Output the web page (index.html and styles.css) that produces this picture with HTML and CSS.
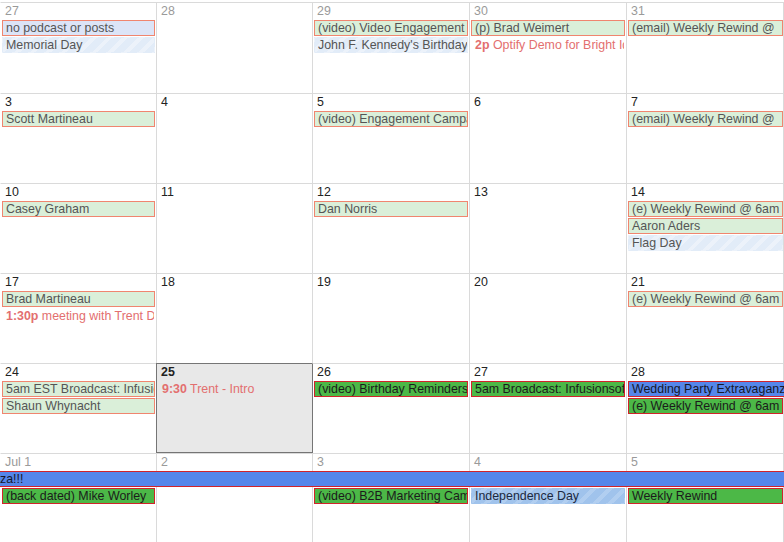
FILE: index.html
```html
<!DOCTYPE html>
<html>
<head>
<meta charset="utf-8">
<link rel="stylesheet" href="styles.css">
</head>
<body>
<div class="cal">
  <div class="week first">
    <div class="day c1 other"><span class="num">27</span></div>
    <div class="day c2 other"><span class="num">28</span></div>
    <div class="day c3 other"><span class="num">29</span></div>
    <div class="day c4 other"><span class="num">30</span></div>
    <div class="day c5 other"><span class="num">31</span></div>
    <div class="ev chip pale-blue c1 r2">no podcast or posts</div>
    <div class="ev stripe c1 r3">Memorial Day</div>
    <div class="ev chip pale c3 r2">(video) Video Engagement Campaign</div>
    <div class="ev stripe c3 r3">John F. Kennedy's Birthday</div>
    <div class="ev chip pale c4 r2">(p) Brad Weimert</div>
    <div class="ev timed c4 r3"><b>2p</b> Optify Demo for Bright Ideas</div>
    <div class="ev chip pale c5 r2">(email) Weekly Rewind @</div>
  </div>

  <div class="week">
    <div class="day c1"><span class="num">3</span></div>
    <div class="day c2"><span class="num">4</span></div>
    <div class="day c3"><span class="num">5</span></div>
    <div class="day c4"><span class="num">6</span></div>
    <div class="day c5"><span class="num">7</span></div>
    <div class="ev chip pale c1 r2">Scott Martineau</div>
    <div class="ev chip pale c3 r2">(video) Engagement Campaign</div>
    <div class="ev chip pale c5 r2">(email) Weekly Rewind @</div>
  </div>

  <div class="week">
    <div class="day c1"><span class="num">10</span></div>
    <div class="day c2"><span class="num">11</span></div>
    <div class="day c3"><span class="num">12</span></div>
    <div class="day c4"><span class="num">13</span></div>
    <div class="day c5"><span class="num">14</span></div>
    <div class="ev chip pale c1 r2">Casey Graham</div>
    <div class="ev chip pale c3 r2">Dan Norris</div>
    <div class="ev chip pale c5 r2">(e) Weekly Rewind @ 6am</div>
    <div class="ev chip pale c5 r3">Aaron Aders</div>
    <div class="ev stripe c5 r4">Flag Day</div>
  </div>

  <div class="week">
    <div class="day c1"><span class="num">17</span></div>
    <div class="day c2"><span class="num">18</span></div>
    <div class="day c3"><span class="num">19</span></div>
    <div class="day c4"><span class="num">20</span></div>
    <div class="day c5"><span class="num">21</span></div>
    <div class="ev chip pale c1 r2">Brad Martineau</div>
    <div class="ev timed c1 r3"><b>1:30p</b> meeting with Trent Dyrsmid</div>
    <div class="ev chip pale c5 r2">(e) Weekly Rewind @ 6am</div>
  </div>

  <div class="week">
    <div class="day c1"><span class="num">24</span></div>
    <div class="day c2 today"><span class="num">25</span></div>
    <div class="day c3 after-today"><span class="num">26</span></div>
    <div class="day c4"><span class="num">27</span></div>
    <div class="day c5"><span class="num">28</span></div>
    <div class="ev chip pale c1 r2">5am EST Broadcast: Infusionsoft</div>
    <div class="ev chip pale c1 r3">Shaun Whynacht</div>
    <div class="ev timed c2 r2"><b>9:30</b> Trent - Intro</div>
    <div class="ev chip green c3 r2">(video) Birthday Reminders</div>
    <div class="ev chip green c4 r2">5am Broadcast: Infusionsoft</div>
    <div class="ev chip bar c5 r2 cont-right">Wedding Party Extravaganza!!!</div>
    <div class="ev chip green c5 r3">(e) Weekly Rewind @ 6am</div>
  </div>

  <div class="week">
    <div class="day c1 other"><span class="num">Jul 1</span></div>
    <div class="day c2 other"><span class="num">2</span></div>
    <div class="day c3 other"><span class="num">3</span></div>
    <div class="day c4 other"><span class="num">4</span></div>
    <div class="day c5 other"><span class="num">5</span></div>
    <div class="ev chip bar span-all r2">za!!!</div>
    <div class="ev chip green c1 r3">(back dated) Mike Worley</div>
    <div class="ev chip green c3 r3">(video) B2B Marketing Campaign</div>
    <div class="ev stripe-strong c4 r3">Independence Day</div>
    <div class="ev chip green c5 r3">Weekly Rewind</div>
  </div>
</div>
</body>
</html>
```

FILE: styles.css
```css
html, body {
  margin: 0;
  padding: 0;
  background: #fff;
}
body {
  overflow: hidden;
  width: 784px;
  height: 542px;
  font-family: "Liberation Sans", Arial, sans-serif;
  font-size: 12.4px;
  color: #222;
}
.cal {
  padding-top: 2px;
  width: 784px;
}
.week {
  display: grid;
  grid-template-columns: 156px 156px 157px 157px 158px;
  grid-template-rows: 18px 17px 17px 17px 17px 1fr;
  height: 90px;
}
.week.first {
  height: 91px;
}
.day {
  grid-row: 1 / -1;
  border-top: 1px solid #dadada;
  border-left: 1px solid #dadada;
  padding: 1px 0 0 4px;
  line-height: 14px;
  color: #222;
}
.day.c1 { border-left-color: #fff; }
.day.c5 { border-right: 1px solid #dadada; }
.day.other { color: #9a9a9a; }
.day.today {
  background: #e8e8e8;
  border-top-color: #757575;
  border-left-color: #757575;
  box-shadow: inset 0 -1px 0 #757575;
}
.day.today .num { font-weight: bold; }
.day.after-today { border-left-color: #757575; }

.c1 { grid-column: 1; }
.c2 { grid-column: 2; }
.c3 { grid-column: 3; }
.c4 { grid-column: 4; }
.c5 { grid-column: 5; }
.r2 { grid-row: 2; }
.r3 { grid-row: 3; }
.r4 { grid-row: 4; }
.span-all { grid-column: 1 / 6; }

.ev {
  height: 16px;
  margin: 0 1px 1px 2px;
  box-sizing: border-box;
  border: 1px solid transparent;
  padding: 0 0 0 3px;
  line-height: 14px;
  white-space: nowrap;
  overflow: hidden;
}
.chip.pale {
  background: #daefd9;
  border-color: #f0856f;
  color: #555;
}
.chip.pale-blue {
  background: #dce4f7;
  border-color: #f0856f;
  color: #555;
}
.stripe {
  background: repeating-linear-gradient(135deg, #e2ecf8 0 7px, #ecf2fa 7px 11px);
  color: #555;
}
.stripe-strong {
  background: repeating-linear-gradient(135deg, #a0c3ec 0 7px, #b1cef0 7px 11px);
  color: #1c2940;
}
.timed {
  color: #e36f6f;
}
.timed b {
  font-weight: bold;
}
.chip.green {
  background: #4cb847;
  border-color: #d1232a;
  color: #1b1b1b;
}
.chip.bar {
  background: #5586ea;
  border-color: #d1232a;
  color: #15182a;
}
.cont-right {
  margin-right: -40px;
  border-right: none;
}
.span-all.bar {
  margin-left: 0;
  margin-right: -40px;
  border-left: none;
  border-right: none;
  padding-left: 0;
}
```
